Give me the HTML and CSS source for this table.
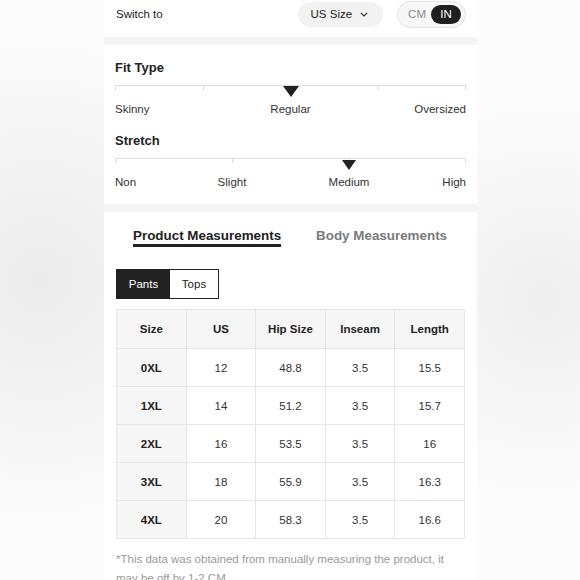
FILE: index.html
```html
<!DOCTYPE html>
<html lang="en">
<head>
<meta charset="utf-8">
<title>Size Guide</title>
<link rel="stylesheet" href="styles.css">
</head>
<body>
<div class="page">
  <section class="switch-row">
    <span class="switch-label">Switch to</span>
    <button class="size-pill">US Size
      <svg class="chev" width="8" height="5" viewBox="0 0 8 5"><polyline points="0.8,0.8 4,4 7.2,0.8" fill="none" stroke="#333" stroke-width="1.2"/></svg>
    </button>
    <div class="unit-toggle">
      <span class="unit">CM</span>
      <span class="unit unit-active">IN</span>
    </div>
  </section>

  <section class="fit-card">
    <div class="scale">
      <h3 class="scale-title">Fit Type</h3>
      <div class="track track-fit">
        <span class="seg"></span><span class="seg"></span><span class="seg seg-last"></span>
        <span class="marker marker-half"></span>
      </div>
      <div class="labels labels-fit">
        <span class="lab-start">Skinny</span>
        <span class="lab-mid">Regular</span>
        <span class="lab-end">Oversized</span>
      </div>
    </div>
    <div class="scale scale-second">
      <h3 class="scale-title">Stretch</h3>
      <div class="track track-stretch">
        <span class="seg"></span><span class="seg"></span><span class="seg seg-last"></span>
        <span class="marker marker-two-thirds"></span>
      </div>
      <div class="labels labels-stretch">
        <span class="lab-non">Non</span>
        <span class="lab-slight">Slight</span>
        <span class="lab-medium">Medium</span>
        <span class="lab-high">High</span>
      </div>
    </div>
  </section>

  <section class="measure-card">
    <div class="tabs">
      <span class="tab tab-active">Product Measurements</span>
      <span class="tab">Body Measurements</span>
    </div>
    <div class="seg-buttons">
      <span class="seg-btn seg-btn-active">Pants</span>
      <span class="seg-btn">Tops</span>
    </div>
    <table class="size-table">
      <thead>
        <tr><th>Size</th><th>US</th><th>Hip Size</th><th>Inseam</th><th>Length</th></tr>
      </thead>
      <tbody>
        <tr><th>0XL</th><td>12</td><td>48.8</td><td>3.5</td><td>15.5</td></tr>
        <tr><th>1XL</th><td>14</td><td>51.2</td><td>3.5</td><td>15.7</td></tr>
        <tr><th>2XL</th><td>16</td><td>53.5</td><td>3.5</td><td>16</td></tr>
        <tr><th>3XL</th><td>18</td><td>55.9</td><td>3.5</td><td>16.3</td></tr>
        <tr><th>4XL</th><td>20</td><td>58.3</td><td>3.5</td><td>16.6</td></tr>
      </tbody>
    </table>
    <p class="note">*This data was obtained from manually measuring the product, it may be off by 1-2 CM.</p>
  </section>
</div>
</body>
</html>
```

FILE: styles.css
```css
* { box-sizing: border-box; }

html, body { height: 100%; }

body {
  margin: 0;
  font-family: "Liberation Sans", Arial, sans-serif;
  color: #222;
  background:
    radial-gradient(circle at 40px 280px, #ebebeb 0, #f3f3f3 110px, #fbfbfb 240px, rgba(252,252,252,0) 300px),
    radial-gradient(circle at 545px 300px, #eeeeee 0, #f6f6f6 100px, rgba(252,252,252,0) 220px),
    #fcfcfc;
  overflow: hidden;
}

.page {
  width: 373px;
  margin-left: 104px;
  min-height: 580px;
  background: #f4f4f4;
  display: flex;
  flex-direction: column;
  gap: 8px;
}

/* top row */
.switch-row {
  background: #fff;
  height: 37px;
  padding: 0 11px 9px 12px;
  display: flex;
  align-items: center;
}

.switch-label {
  font-size: 11.5px;
  color: #222;
  flex: 1;
}

.size-pill {
  height: 25px;
  border: 0;
  border-radius: 13px;
  background: #f2f2f2;
  padding: 0 15px 0 13px;
  font-family: inherit;
  font-size: 11.5px;
  color: #222;
  display: flex;
  align-items: center;
  gap: 8px;
  margin-right: 14px;
}

.chev { display: block; margin-top: 1px; }

.unit-toggle {
  height: 27px;
  border: 1px solid #e3e3e3;
  border-radius: 14px;
  background: #f7f7f7;
  display: flex;
  align-items: center;
  padding: 0 4px 0 10px;
  gap: 5px;
}

.unit {
  font-size: 11.5px;
  color: #8a8a8a;
}

.unit-active {
  background: #1f1f1f;
  color: #fff;
  height: 19px;
  width: 30px;
  border-radius: 10px;
  display: flex;
  align-items: center;
  justify-content: center;
}

/* fit card */
.fit-card {
  background: #fff;
  padding: 15px 11px 15px 11px;
}

.scale-second { margin-top: 17px; }

.scale-title {
  margin: 0 0 9px;
  font-size: 13px;
  line-height: 16px;
  font-weight: bold;
  color: #222;
}

.track {
  position: relative;
  height: 5px;
  display: grid;
}

.track-fit { grid-template-columns: 1fr 2fr 1fr; }
.track-stretch { grid-template-columns: 1fr 1fr 1fr; }

.seg {
  border-top: 1px solid #dcdcdc;
  border-left: 1px solid #dcdcdc;
}

.seg-last { border-right: 1px solid #dcdcdc; }

.marker {
  position: absolute;
  top: 1px;
  width: 0;
  height: 0;
  border-left: 8px solid transparent;
  border-right: 8px solid transparent;
  border-top: 11px solid #222;
  transform: translateX(-50%);
}

.marker-half { left: 50%; }
.marker-two-thirds { left: 66.667%; top: 2px; border-left-width: 7.5px; border-right-width: 7.5px; border-top-width: 10px; }

.labels {
  margin-top: 12px;
  font-size: 11.5px;
  line-height: 14px;
  color: #333;
  display: grid;
}

.labels-fit { grid-template-columns: 1fr auto 1fr; }
.lab-start { justify-self: start; }
.lab-mid { justify-self: center; }
.lab-end { justify-self: end; }

.labels-stretch { grid-template-columns: repeat(6, 1fr); }
.lab-non { grid-column: 1; justify-self: start; }
.lab-slight { grid-column: 2 / span 2; justify-self: center; }
.lab-medium { grid-column: 4 / span 2; justify-self: center; }
.lab-high { grid-column: 6; justify-self: end; }

/* measurements card */
.measure-card {
  background: #fff;
  padding: 16px 11px 0 12px;
  flex: 1;
}

.tabs {
  display: flex;
  gap: 35px;
  padding-left: 17px;
}

.tab {
  font-size: 13.4px;
  line-height: 16px;
  font-weight: bold;
  color: #7a7a7a;
  border-bottom: 3px solid transparent;
}

.tab-active {
  color: #222;
  border-bottom-color: #222;
}

.seg-buttons {
  display: inline-flex;
  margin-top: 22px;
  border: 1px solid #222;
  height: 30px;
}

.seg-btn {
  font-size: 11.5px;
  color: #222;
  background: #fff;
  display: flex;
  align-items: center;
  justify-content: center;
  width: 48px;
}

.seg-btn-active {
  background: #222;
  color: #fff;
  width: 53px;
}

.size-table {
  display: table;
  margin-top: 10px;
  width: 349px;
  border-collapse: collapse;
  table-layout: fixed;
  font-size: 11.5px;
}

.size-table th,
.size-table td {
  border: 1px solid #e6e6e6;
  text-align: center;
  padding: 0;
  height: 38px;
}

.size-table thead th {
  height: 39px;
  background: #f6f6f6;
  font-weight: bold;
  color: #222;
}

.size-table tbody th {
  background: #f6f6f6;
  font-weight: bold;
  color: #222;
}

.size-table td {
  color: #333;
  background: #fff;
}

.note {
  margin: 11px 0 0;
  width: 345px;
  font-size: 11.5px;
  line-height: 19px;
  color: #9a9a9a;
}
```
